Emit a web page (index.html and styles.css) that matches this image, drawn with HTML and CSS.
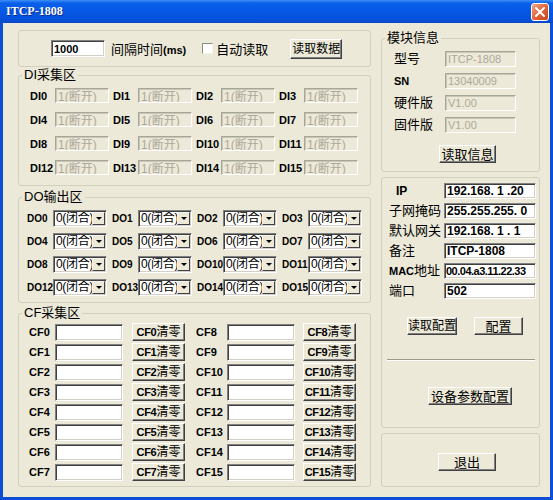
FILE: index.html
```html
<!DOCTYPE html>
<html lang="zh-CN">
<head>
    <meta charset="UTF-8">
    <title>ITCP-1808</title>
    <link rel="stylesheet" href="styles.css">
</head>
<body>
<div class="window">
    <div class="titlebar">
        <span class="title">ITCP-1808</span>
        <span class="close">
            <svg width="10" height="10" viewBox="0 0 10 10"><path d="M1 1L9 9M9 1L1 9" stroke="#fff" stroke-width="2" stroke-linecap="square"/></svg>
        </span>
    </div>
    <div class="client">
        <div class="left">
            <div class="panel toolbar">
                <span class="edit interval"><b>1000</b></span>
                <span class="txt">间隔时间<b class="ms">(ms)</b></span>
                <span class="check"></span>
                <span class="txt">自动读取</span>
                <span class="btn read-data">读取数据</span>
            </div>

            <fieldset class="group">
                <legend>DI采集区</legend>
                <div class="di-grid">
                    <div class="cell"><span class="lbl">DI0</span><span class="edit off">1(断开)</span></div>
                    <div class="cell"><span class="lbl">DI1</span><span class="edit off">1(断开)</span></div>
                    <div class="cell"><span class="lbl">DI2</span><span class="edit off">1(断开)</span></div>
                    <div class="cell"><span class="lbl">DI3</span><span class="edit off">1(断开)</span></div>
                    <div class="cell"><span class="lbl">DI4</span><span class="edit off">1(断开)</span></div>
                    <div class="cell"><span class="lbl">DI5</span><span class="edit off">1(断开)</span></div>
                    <div class="cell"><span class="lbl">DI6</span><span class="edit off">1(断开)</span></div>
                    <div class="cell"><span class="lbl">DI7</span><span class="edit off">1(断开)</span></div>
                    <div class="cell"><span class="lbl">DI8</span><span class="edit off">1(断开)</span></div>
                    <div class="cell"><span class="lbl">DI9</span><span class="edit off">1(断开)</span></div>
                    <div class="cell"><span class="lbl">DI10</span><span class="edit off">1(断开)</span></div>
                    <div class="cell"><span class="lbl">DI11</span><span class="edit off">1(断开)</span></div>
                    <div class="cell"><span class="lbl">DI12</span><span class="edit off">1(断开)</span></div>
                    <div class="cell"><span class="lbl">DI13</span><span class="edit off">1(断开)</span></div>
                    <div class="cell"><span class="lbl">DI14</span><span class="edit off">1(断开)</span></div>
                    <div class="cell"><span class="lbl">DI15</span><span class="edit off">1(断开)</span></div>
                </div>
            </fieldset>

            <fieldset class="group do-group">
                <legend>DO输出区</legend>
                <div class="do-grid">
                    <div class="cell"><span class="lbl">DO0</span><span class="combo"><span class="val">0(闭合)</span><span class="arrow"></span></span></div>
                    <div class="cell"><span class="lbl">DO1</span><span class="combo"><span class="val">0(闭合)</span><span class="arrow"></span></span></div>
                    <div class="cell"><span class="lbl">DO2</span><span class="combo"><span class="val">0(闭合)</span><span class="arrow"></span></span></div>
                    <div class="cell"><span class="lbl">DO3</span><span class="combo"><span class="val">0(闭合)</span><span class="arrow"></span></span></div>
                    <div class="cell"><span class="lbl">DO4</span><span class="combo"><span class="val">0(闭合)</span><span class="arrow"></span></span></div>
                    <div class="cell"><span class="lbl">DO5</span><span class="combo"><span class="val">0(闭合)</span><span class="arrow"></span></span></div>
                    <div class="cell"><span class="lbl">DO6</span><span class="combo"><span class="val">0(闭合)</span><span class="arrow"></span></span></div>
                    <div class="cell"><span class="lbl">DO7</span><span class="combo"><span class="val">0(闭合)</span><span class="arrow"></span></span></div>
                    <div class="cell"><span class="lbl">DO8</span><span class="combo"><span class="val">0(闭合)</span><span class="arrow"></span></span></div>
                    <div class="cell"><span class="lbl">DO9</span><span class="combo"><span class="val">0(闭合)</span><span class="arrow"></span></span></div>
                    <div class="cell"><span class="lbl">DO10</span><span class="combo"><span class="val">0(闭合)</span><span class="arrow"></span></span></div>
                    <div class="cell"><span class="lbl">DO11</span><span class="combo"><span class="val">0(闭合)</span><span class="arrow"></span></span></div>
                    <div class="cell"><span class="lbl">DO12</span><span class="combo"><span class="val">0(闭合)</span><span class="arrow"></span></span></div>
                    <div class="cell"><span class="lbl">DO13</span><span class="combo"><span class="val">0(闭合)</span><span class="arrow"></span></span></div>
                    <div class="cell"><span class="lbl">DO14</span><span class="combo"><span class="val">0(闭合)</span><span class="arrow"></span></span></div>
                    <div class="cell"><span class="lbl">DO15</span><span class="combo"><span class="val">0(闭合)</span><span class="arrow"></span></span></div>
                </div>
            </fieldset>

            <fieldset class="group cf-group">
                <legend>CF采集区</legend>
                <div class="cf-cols">
                    <div class="cf-col">
                        <div class="cf-row"><span class="lbl">CF0</span><span class="edit cf"></span><span class="btn clr"><b>CF0</b>清零</span></div>
                        <div class="cf-row"><span class="lbl">CF1</span><span class="edit cf"></span><span class="btn clr"><b>CF1</b>清零</span></div>
                        <div class="cf-row"><span class="lbl">CF2</span><span class="edit cf"></span><span class="btn clr"><b>CF2</b>清零</span></div>
                        <div class="cf-row"><span class="lbl">CF3</span><span class="edit cf"></span><span class="btn clr"><b>CF3</b>清零</span></div>
                        <div class="cf-row"><span class="lbl">CF4</span><span class="edit cf"></span><span class="btn clr"><b>CF4</b>清零</span></div>
                        <div class="cf-row"><span class="lbl">CF5</span><span class="edit cf"></span><span class="btn clr"><b>CF5</b>清零</span></div>
                        <div class="cf-row"><span class="lbl">CF6</span><span class="edit cf"></span><span class="btn clr"><b>CF6</b>清零</span></div>
                        <div class="cf-row"><span class="lbl">CF7</span><span class="edit cf"></span><span class="btn clr"><b>CF7</b>清零</span></div>
                    </div>
                    <div class="cf-col wide">
                        <div class="cf-row"><span class="lbl">CF8</span><span class="edit cf"></span><span class="btn clr"><b>CF8</b>清零</span></div>
                        <div class="cf-row"><span class="lbl">CF9</span><span class="edit cf"></span><span class="btn clr"><b>CF9</b>清零</span></div>
                        <div class="cf-row"><span class="lbl">CF10</span><span class="edit cf"></span><span class="btn clr"><b>CF10</b>清零</span></div>
                        <div class="cf-row"><span class="lbl">CF11</span><span class="edit cf"></span><span class="btn clr"><b>CF11</b>清零</span></div>
                        <div class="cf-row"><span class="lbl">CF12</span><span class="edit cf"></span><span class="btn clr"><b>CF12</b>清零</span></div>
                        <div class="cf-row"><span class="lbl">CF13</span><span class="edit cf"></span><span class="btn clr"><b>CF13</b>清零</span></div>
                        <div class="cf-row"><span class="lbl">CF14</span><span class="edit cf"></span><span class="btn clr"><b>CF14</b>清零</span></div>
                        <div class="cf-row"><span class="lbl">CF15</span><span class="edit cf"></span><span class="btn clr"><b>CF15</b>清零</span></div>
                    </div>
                </div>
            </fieldset>
        </div>

        <div class="right">
            <fieldset class="group info">
                <legend>模块信息</legend>
                <div class="info-rows">
                    <div class="row"><span class="name">型号</span><span class="edit off info-val">ITCP-1808</span></div>
                    <div class="row"><span class="name"><b>SN</b></span><span class="edit off info-val">13040009</span></div>
                    <div class="row"><span class="name">硬件版</span><span class="edit off info-val">V1.00</span></div>
                    <div class="row"><span class="name">固件版</span><span class="edit off info-val">V1.00</span></div>
                </div>
                <span class="btn big read-info">读取信息</span>
            </fieldset>

            <div class="panel config">
                <div class="row"><span class="name ip"><b>IP</b></span><span class="edit net">192.168. 1 .20</span></div>
                <div class="row"><span class="name">子网掩码</span><span class="edit net">255.255.255. 0</span></div>
                <div class="row"><span class="name">默认网关</span><span class="edit net">192.168. 1 . 1</span></div>
                <div class="row"><span class="name">备注</span><span class="edit net">ITCP-1808</span></div>
                <div class="row"><span class="name"><b class="mac">MAC</b>地址</span><span class="edit net mac-val">00.04.a3.11.22.33</span></div>
                <div class="row"><span class="name">端口</span><span class="edit net">502</span></div>
                <div class="cfg-btns">
                    <span class="btn read-cfg">读取配置</span>
                    <span class="btn big set-cfg">配置</span>
                </div>
                <div class="etched"></div>
                <span class="btn big dev-cfg">设备参数配置</span>
            </div>

            <div class="panel exit-box">
                <span class="btn big exit">退出</span>
            </div>
        </div>
    </div>
</div>
</body>
</html>
```

FILE: styles.css
```css
* {
    box-sizing: border-box;
}
body {
    margin: 0;
    font-family: "Liberation Sans", "Noto Sans CJK SC", sans-serif;
    font-size: 13px;
    color: #000;
}
.window {
    width: 553px;
    height: 500px;
    background: #0c4ed6;
    display: flex;
    flex-direction: column;
}
.titlebar {
    height: 23px;
    flex: none;
    display: flex;
    align-items: center;
    justify-content: space-between;
    padding: 0 4px 0 6px;
    background: linear-gradient(#3d8ff6 0, #0b60ea 3px, #0557e5 11px, #0553de 18px, #0748c6 23px);
}
.title {
    color: #fff;
    font-family: "Liberation Serif", serif;
    font-weight: bold;
    font-size: 12px;
    text-shadow: 1px 1px #0b2f8e;
}
.close {
    width: 18px;
    height: 18px;
    border: 1px solid #fff;
    border-radius: 3px;
    background: linear-gradient(135deg, #f2a487, #e2643a 50%, #c8441b);
    display: flex;
    align-items: center;
    justify-content: center;
}
.client {
    flex: 1;
    margin: 0 3px 3px;
    background: #ece9d8;
    display: flex;
    gap: 10px;
    padding: 7px 0 0 15px;
}
.left {
    width: 353px;
}
.right {
    width: 159px;
}

/* group boxes */
.panel {
    border: 1px solid #d0d0bf;
    border-radius: 3px;
}
.group {
    margin: 0;
    padding: 0 0 0 3px;
    min-width: 0;
    border: 1px solid #d0d0bf;
    border-radius: 3px;
}
.group legend {
    padding: 0 2px;
    font-size: 13px;
    line-height: 16px;
}

/* common controls */
.edit {
    display: flex;
    align-items: center;
    background: #fff;
    border: 1px solid;
    border-color: #808080 #fff #fff #808080;
    box-shadow: inset 1px 1px #404040, inset -1px -1px #d4d0c8;
    padding: 0 2px;
    white-space: pre;
    overflow: hidden;
    font-size: 12px;
}
.edit.off {
    background: #ece9d8;
    color: #aca899;
    border-color: #a7a69a #fff #fff #a7a69a;
    box-shadow: inset 1px 1px #c9c6b6;
}
.btn {
    display: flex;
    align-items: center;
    justify-content: center;
    background: #ece9d8;
    border: 1px solid;
    border-color: #fff #404040 #404040 #fff;
    box-shadow: inset -1px -1px #808080;
    font-size: 12px;
    line-height: 1;
    white-space: nowrap;
}
.btn.big {
    font-size: 13px;
}
.btn b {
    font-size: 11px;
    letter-spacing: -0.3px;
}
.lbl {
    font-weight: bold;
    font-size: 11px;
}
.txt {
    font-size: 13px;
}

/* top bar */
.toolbar {
    height: 37px;
    display: flex;
    align-items: center;
    padding-left: 32px;
}
.interval {
    width: 54px;
    height: 17px;
    font-size: 11px;
    margin-right: 6px;
}
.ms {
    font-size: 11px;
}
.check {
    width: 11px;
    height: 11px;
    margin: 0 3px 0 16px;
    background: #fff;
    border: 1px solid;
    border-color: #8d8b80 #f4f3ee #f4f3ee #8d8b80;
}
.read-data {
    width: 52px;
    height: 20px;
    margin-left: 22px;
}

/* DI */
.di-grid {
    display: grid;
    grid-template-columns: repeat(4, 83px);
    row-gap: 9px;
    padding: 5px 0 10px 8px;
}
.cell {
    display: flex;
    align-items: center;
}
.di-grid .lbl {
    width: 25px;
}
.di-grid .edit {
    width: 54px;
    height: 15px;
}

/* DO */
.do-group {
    margin-top: 3px;
}
.do-grid {
    display: grid;
    grid-template-columns: repeat(4, 85px);
    row-gap: 6px;
    padding: 5px 0 6px 5px;
}
.do-grid .lbl {
    width: 26px;
    font-size: 10px;
}
.combo {
    width: 54px;
    height: 17px;
    display: flex;
    background: #fff;
    border: 1px solid;
    border-color: #808080 #fff #fff #808080;
    box-shadow: inset 1px 1px #404040, inset -1px -1px #d4d0c8;
    padding: 1px;
}
.combo .val {
    flex: 1;
    font-size: 12px;
    line-height: 13px;
    padding-left: 1px;
    overflow: hidden;
    white-space: nowrap;
    letter-spacing: -0.3px;
}
.combo .arrow {
    width: 13px;
    background: #ece9d8;
    border: 1px solid;
    border-color: #f4f3ee #404040 #404040 #f4f3ee;
    display: flex;
    align-items: center;
    justify-content: center;
}
.combo .arrow::after {
    content: "";
    border-left: 3px solid transparent;
    border-right: 3px solid transparent;
    border-top: 3px solid #000;
}

/* CF */
.cf-group {
    margin-top: 2px;
}
.cf-cols {
    display: flex;
    gap: 11px;
    padding: 2px 0 5px 7px;
}
.cf-col {
    display: flex;
    flex-direction: column;
    gap: 2px;
}
.cf-row {
    display: flex;
    align-items: center;
    height: 18px;
}
.cf-row .lbl {
    width: 26px;
}
.cf-col.wide .lbl {
    width: 31px;
}
.cf-row .edit {
    width: 68px;
    height: 17px;
}
.cf-row .clr {
    width: 53px;
    height: 18px;
    margin-left: 9px;
}
.cf-col.wide .clr {
    margin-left: 8px;
}

/* right side */
.row {
    display: flex;
    align-items: center;
    height: 16px;
}
.name {
    font-size: 13px;
    line-height: 16px;
}
.name b {
    font-size: 11px;
}
.info-rows {
    display: flex;
    flex-direction: column;
    gap: 6px;
    padding: 5px 0 0 9px;
}
.info .name {
    width: 51px;
}
.info-val {
    width: 71px;
    height: 16px;
    font-size: 11px;
}
.read-info {
    width: 57px;
    height: 18px;
    margin: 12px 0 8px 54px;
}
.config {
    margin-top: 5px;
    padding: 5px 0 0 7px;
    display: flex;
    flex-direction: column;
    gap: 4px;
    height: 251px;
}
.config .name {
    width: 55px;
    white-space: nowrap;
}
.config .name.ip {
    padding-left: 7px;
}
.config .name b {
    font-size: 12px;
}
.config .name b.mac {
    font-size: 11px;
}
.net {
    width: 92px;
    height: 16px;
    font-weight: bold;
    font-size: 12px;
}
.net.mac-val {
    font-size: 11px;
    letter-spacing: -0.5px;
    padding: 0 1px;
}
.cfg-btns {
    display: flex;
    gap: 17px;
    margin: 14px 0 0 18px;
}
.read-cfg {
    width: 50px;
    height: 18px;
}
.set-cfg {
    width: 49px;
    height: 18px;
}
.etched {
    margin: 20px 0 0 -2px;
    width: 148px;
    border-top: 1px solid #9d9a8c;
    border-bottom: 1px solid #fff;
}
.dev-cfg {
    width: 84px;
    height: 18px;
    margin: 22px 0 0 39px;
}
.exit-box {
    margin-top: 5px;
    height: 54px;
    padding: 19px 0 0 56px;
}
.exit {
    width: 58px;
    height: 18px;
}
```
